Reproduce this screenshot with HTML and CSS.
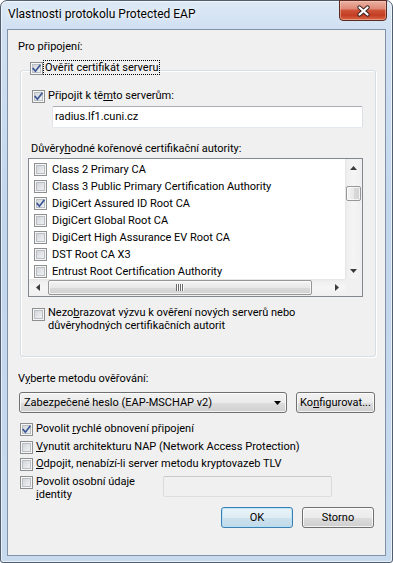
FILE: index.html
```html
<!DOCTYPE html>
<html lang="cs">
<head>
<meta charset="utf-8">
<title>Vlastnosti protokolu Protected EAP</title>
<link rel="stylesheet" href="styles.css">
</head>
<body>
<div class="window">
  <div class="titlebar">
    <div class="title">Vlastnosti protokolu Protected EAP</div>
    <div class="close-btn">
      <svg class="close-x" width="15" height="12" viewBox="0 0 15 12"><path class="x-out" d="M3.5 2.5 L11.5 9.5 M11.5 2.5 L3.5 9.5"/><path class="x-in" d="M3.5 2.5 L11.5 9.5 M11.5 2.5 L3.5 9.5"/></svg>
    </div>
  </div>
  <div class="client">
    <div class="caption first-caption">Pro připojení:</div>
    <fieldset class="group">
      <legend class="group-head">
        <span class="cb on"><svg class="tick" width="11" height="11" viewBox="0 0 11 11"><path d="M2.2 5.6 L4.4 8.2 L8.9 2.4"/></svg></span><span class="focus-text">Ověřit certifikát serveru</span>
      </legend>
      <div class="row row-servers"><span class="cb on"><svg class="tick" width="11" height="11" viewBox="0 0 11 11"><path d="M2.2 5.6 L4.4 8.2 L8.9 2.4"/></svg></span><span class="row-text">Připojit k tě<u>m</u>to serverům:</span></div>
      <div class="textbox">radius.lf1.cuni.cz</div>
      <div class="caption list-caption">Důvěry<u>h</u>odné kořenové certifikační autority:</div>
      <div class="listbox">
        <div class="list-items">
          <div class="list-row"><span class="cb"></span><span class="list-text">Class 2 Primary CA</span></div>
          <div class="list-row"><span class="cb"></span><span class="list-text">Class 3 Public Primary Certification Authority</span></div>
          <div class="list-row"><span class="cb on"><svg class="tick" width="11" height="11" viewBox="0 0 11 11"><path d="M2.2 5.6 L4.4 8.2 L8.9 2.4"/></svg></span><span class="list-text">DigiCert Assured ID Root CA</span></div>
          <div class="list-row"><span class="cb"></span><span class="list-text">DigiCert Global Root CA</span></div>
          <div class="list-row"><span class="cb"></span><span class="list-text">DigiCert High Assurance EV Root CA</span></div>
          <div class="list-row"><span class="cb"></span><span class="list-text">DST Root CA X3</span></div>
          <div class="list-row"><span class="cb"></span><span class="list-text">Entrust Root Certification Authority</span></div>
        </div>
        <div class="vscroll">
          <div class="sb-btn"><svg width="7" height="4" viewBox="0 0 7 4"><polygon class="arrow" points="0,4 3.5,0 7,4"/></svg></div>
          <div class="vtrack"><div class="vthumb"></div></div>
          <div class="sb-btn"><svg width="7" height="4" viewBox="0 0 7 4"><polygon class="arrow" points="0,0 7,0 3.5,4"/></svg></div>
        </div>
        <div class="hscroll">
          <div class="sb-btn"><svg width="4" height="7" viewBox="0 0 4 7"><polygon class="arrow" points="4,0 4,7 0,3.5"/></svg></div>
          <div class="htrack"><div class="hthumb"><svg width="8" height="7" viewBox="0 0 8 7"><path class="grip" d="M0.5 0 V7 M2.5 0 V7 M4.5 0 V7 M6.5 0 V7"/><path class="grip-light" d="M1.5 0 V7 M3.5 0 V7 M5.5 0 V7 M7.5 0 V7"/></svg></div></div>
          <div class="sb-btn"><svg width="4" height="7" viewBox="0 0 4 7"><polygon class="arrow" points="0,0 4,3.5 0,7"/></svg></div>
        </div>
        <div class="sb-corner"></div>
      </div>
      <div class="row row-multi row-noprompt"><span class="cb"></span><span class="row-text">Nezo<u>b</u>razovat výzvu k ověření nových serverů nebo<br>důvěryhodných certifikačních autorit</span></div>
    </fieldset>
    <div class="caption method-caption">V<u>y</u>berte metodu ověřování:</div>
    <div class="method-row">
      <div class="combo"><span class="combo-text">Zabezpečené heslo (EAP-MSCHAP v2)</span><svg width="7" height="4" viewBox="0 0 7 4"><polygon class="arrow-dark" points="0,0 7,0 3.5,4"/></svg></div>
      <div class="btn btn-config">Ko<u>n</u>figurovat...</div>
    </div>
    <div class="options">
      <div class="row opt"><span class="cb on"><svg class="tick" width="11" height="11" viewBox="0 0 11 11"><path d="M2.2 5.6 L4.4 8.2 L8.9 2.4"/></svg></span><span class="row-text">Povolit <u>r</u>ychlé obnovení připojení</span></div>
      <div class="row opt opt-gap"><span class="cb"></span><span class="row-text"><u>V</u>ynutit architekturu NAP (Network Access Protection)</span></div>
      <div class="row opt"><span class="cb"></span><span class="row-text"><u>O</u>dpojit, nenabízí-li server metodu kryptovazeb TLV</span></div>
      <div class="opt-identity">
        <div class="row row-multi identity-check"><span class="cb"></span><span class="row-text">Povolit osobní údaje<br><u>i</u>dentity</span></div>
        <div class="textbox disabled"></div>
      </div>
    </div>
    <div class="dialog-buttons">
      <div class="btn btn-default">OK</div>
      <div class="btn">Storno</div>
    </div>
  </div>
</div>
</body>
</html>
```
FILE: styles.css
```css
* { box-sizing: border-box; }
html, body { margin: 0; padding: 0; background: #ffffff; }
body { width: 393px; height: 563px; overflow: hidden; }

.window {
  width: 393px;
  height: 563px;
  display: flex;
  flex-direction: column;
  padding: 0 6px 6px 6px;
  border: 1px solid #505e70;
  border-radius: 7px 7px 3px 3px;
  background: linear-gradient(180deg, #dde9f6 0px, #d0e0f2 28px, #c2d6ec 220px, #c8daee 563px);
  box-shadow: inset 0 0 0 1px rgba(255, 255, 255, 0.6);
  font-family: Roboto, "Noto Sans", sans-serif;
  font-size: 11px;
  line-height: 15px;
  color: #000;
}

/* title bar */
.titlebar {
  height: 28px;
  flex: none;
  display: flex;
  align-items: flex-start;
}
.title {
  margin: 6px 0 0 1px;
  font-size: 12px;
  white-space: nowrap;
  text-shadow: 0 0 6px rgba(255, 255, 255, 0.95), 0 0 3px rgba(255, 255, 255, 0.9);
}
.close-btn {
  margin: -1px -1px 0 auto;
  width: 48px;
  height: 21px;
  display: flex;
  align-items: center;
  justify-content: center;
  border: 1px solid #5a2b22;
  border-radius: 0 0 4px 4px;
  background: linear-gradient(180deg, #eab1a3 0%, #de8a77 40%, #cd5238 50%, #c43d22 75%, #d86848 100%);
  box-shadow: inset 0 0 0 1px rgba(255, 210, 195, 0.45);
}
.close-x .x-out { stroke: #3b2420; stroke-width: 4.2; fill: none; stroke-linecap: round; }
.close-x .x-in { stroke: #ffffff; stroke-width: 2.3; fill: none; stroke-linecap: round; }

/* client area */
.client {
  flex: 1;
  display: flex;
  flex-direction: column;
  border: 1px solid #8192a8;
  background: #f0f0f0;
  padding-top: 9px;
}
.caption {
  height: 15px;
  margin-left: 10px;
  white-space: nowrap;
}

/* group box */
.group {
  margin: 6px 9px 0 12px;
  padding: 0 0 24px 0;
  min-width: 0;
  border: 1px solid #d5dfe5;
  border-radius: 3px;
  box-shadow: inset 1px 1px 0 #ffffff, 1px 1px 0 #ffffff;
  display: flex;
  flex-direction: column;
  align-items: flex-start;
}
.group-head {
  margin-left: 9px;
  padding: 0 0 6px 0;
  display: flex;
  align-items: flex-start;
  background: #f0f0f0;
}
.group-head .cb { margin-top: 2px; }
.focus-text {
  border: 1px dotted #000;
  line-height: 13px;
  padding: 0 1px 0 1px;
  white-space: nowrap;
}

/* checkbox */
.cb {
  flex: none;
  width: 13px;
  height: 13px;
  border: 1px solid #8e8f8f;
  background: linear-gradient(135deg, #c9cdd3 0%, #e4e6e9 55%, #f7f7f7 100%);
  box-shadow: inset 0 0 0 1px #f6f6f6, inset 0 0 0 2px #b9bec4;
}
.cb .tick { display: block; }
.tick path { fill: none; stroke: #3a5794; stroke-width: 1.7; stroke-linecap: square; stroke-linejoin: miter; }

.row {
  display: flex;
  align-items: flex-start;
  white-space: nowrap;
}
.row .cb { margin-top: 2px; }
.row-text { margin-left: 3px; }
.row-servers { margin: 7px 0 0 11px; height: 15px; }
.row-multi .row-text { line-height: 13px; }
.row-noprompt { margin: 9px 0 0 11px; }

/* text boxes */
.textbox {
  margin: 3px 0 0 31px;
  width: 311px;
  height: 22px;
  border: 1px solid;
  border-color: #abadb3 #dbdfe6 #e3e9ef #e2e3ea;
  border-radius: 2px;
  background: #ffffff;
  padding-left: 2px;
  line-height: 20px;
}
.textbox.disabled {
  margin: 2px 0 0 0;
  width: 169px;
  height: 21px;
  border-color: #c9c9c9 #dadada #dedede #dadada;
  background: #f0f0f0;
}

.list-caption { margin: 13px 0 0 10px; }

/* list box */
.listbox {
  margin: 2px 0 0 7px;
  width: 335px;
  height: 139px;
  border: 1px solid #828790;
  background: #ffffff;
  display: grid;
  grid-template-columns: 316px 17px;
  grid-template-rows: 120px 17px;
}
.list-items {
  overflow: hidden;
  padding: 2px 0 0 5px;
}
.list-row {
  height: 17px;
  display: flex;
  align-items: flex-start;
  white-space: nowrap;
}
.list-row .cb { margin-top: 2px; }
.list-text { margin: 1px 0 0 5px; line-height: 15px; }

.vscroll {
  display: flex;
  flex-direction: column;
  background: linear-gradient(90deg, #e4e4e4 0px, #efefef 2px, #f5f5f5 50%, #efefef 100%);
}
.sb-btn {
  flex: none;
  width: 17px;
  height: 17px;
  display: flex;
  align-items: center;
  justify-content: center;
}
.arrow { fill: #3c3c3c; }
.arrow-dark { fill: #000000; }
.vtrack { flex: 1; padding: 10px 1px 0 1px; }
.vthumb {
  height: 15px;
  border: 1px solid #979797;
  border-radius: 2px;
  background: linear-gradient(90deg, #f4f4f4 0%, #e8e8e8 50%, #dadada 51%, #d2d2d2 100%);
  box-shadow: inset 0 0 0 1px rgba(255, 255, 255, 0.7);
}
.hscroll {
  display: flex;
  background: linear-gradient(180deg, #e4e4e4 0px, #efefef 2px, #f5f5f5 50%, #efefef 100%);
}
.htrack { flex: 1; padding: 1px 0 0 2px; }
.hthumb {
  width: 264px;
  height: 15px;
  border: 1px solid #979797;
  border-radius: 2px;
  background: linear-gradient(180deg, #f4f4f4 0%, #e8e8e8 50%, #dadada 51%, #d2d2d2 100%);
  box-shadow: inset 0 0 0 1px rgba(255, 255, 255, 0.7);
  display: flex;
  align-items: center;
  justify-content: center;
}
.grip { stroke: #6a6a6a; stroke-width: 1; }
.grip-light { stroke: #fafafa; stroke-width: 1; }
.sb-corner { background: #f0f0f0; }

/* method */
.method-caption { margin: 14px 0 0 10px; }
.method-row {
  margin: 6px 0 0 11px;
  display: flex;
  gap: 9px;
}
.combo {
  width: 268px;
  height: 21px;
  border: 1px solid #707070;
  border-radius: 3px;
  background: linear-gradient(180deg, #f2f2f2 0%, #ebebeb 50%, #dddddd 51%, #cfcfcf 100%);
  box-shadow: inset 0 0 0 1px rgba(255, 255, 255, 0.75);
  display: flex;
  align-items: center;
  justify-content: space-between;
  padding: 0 5px 0 4px;
  line-height: 19px;
  white-space: nowrap;
}
.btn {
  width: 72px;
  height: 21px;
  border: 1px solid #707070;
  border-radius: 3px;
  background: linear-gradient(180deg, #f2f2f2 0%, #ebebeb 50%, #dddddd 51%, #cfcfcf 100%);
  box-shadow: inset 0 0 0 1px rgba(255, 255, 255, 0.75);
  text-align: center;
  line-height: 19px;
  white-space: nowrap;
}
.btn-config { width: 79px; }
.btn-default {
  border-color: #3c7fb1;
  background: linear-gradient(180deg, #e9f3f9 0%, #dfecf4 50%, #cde1ed 51%, #c1d9e8 100%);
  box-shadow: inset 0 0 0 1px rgba(175, 225, 250, 0.8);
}

/* options */
.options {
  margin: 8px 0 0 12px;
  display: flex;
  flex-direction: column;
}
.opt { height: 17px; }
.opt-gap { margin-top: 1px; }
.opt-identity {
  margin-top: 1px;
  display: flex;
  align-items: flex-start;
}
.identity-check { width: 143px; flex: none; }
.identity-check .row-text { margin-top: 1px; }

.dialog-buttons {
  margin: 6px 11px 0 0;
  display: flex;
  justify-content: flex-end;
  gap: 9px;
}
```
